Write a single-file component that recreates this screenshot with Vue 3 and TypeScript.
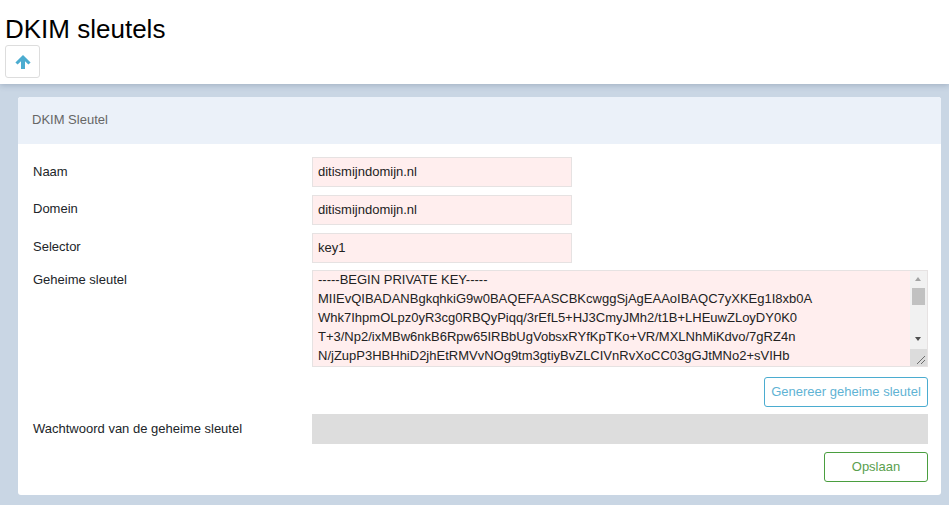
<script setup lang="ts">
const keyText = [
  '-----BEGIN PRIVATE KEY-----',
  'MIIEvQIBADANBgkqhkiG9w0BAQEFAASCBKcwggSjAgEAAoIBAQC7yXKEg1I8xb0A',
  'Whk7IhpmOLpz0yR3cg0RBQyPiqq/3rEfL5+HJ3CmyJMh2/t1B+LHEuwZLoyDY0K0',
  'T+3/Np2/ixMBw6nkB6Rpw65IRBbUgVobsxRYfKpTKo+VR/MXLNhMiKdvo/7gRZ4n',
  'N/jZupP3HBHhiD2jhEtRMVvNOg9tm3gtiyBvZLCIVnRvXoCC03gGJtMNo2+sVIHb',
].join('\n')
</script>

<template>
  <div class="page">
    <header class="top">
      <h1 class="title">DKIM sleutels</h1>
      <button class="up" type="button" aria-label="Omhoog">
        <svg width="16" height="14" viewBox="0 0 16 14">
          <path d="M8 0 L15.6 7.4 L13.4 9.4 L10 6.2 V14 H6 V6.2 L2.6 9.4 L0.4 7.4 Z" fill="#4bacd0" />
        </svg>
      </button>
    </header>
    <main class="main">
      <section class="card">
        <div class="card-head">DKIM Sleutel</div>
        <form class="card-body" @submit.prevent>
          <div class="row name-row">
            <label class="lbl">Naam</label>
            <input class="inp" value="ditismijndomijn.nl" />
          </div>
          <div class="row">
            <label class="lbl">Domein</label>
            <input class="inp" value="ditismijndomijn.nl" />
          </div>
          <div class="row">
            <label class="lbl">Selector</label>
            <input class="inp" value="key1" />
          </div>
          <div class="row key-row">
            <label class="lbl">Geheime sleutel</label>
            <div class="ta-wrap">
              <textarea class="ta" readonly :value="keyText"></textarea>
              <div class="sb">
                <span class="sb-arrow up-arrow"></span>
                <span class="sb-thumb"></span>
                <span class="sb-arrow down-arrow"></span>
                <span class="sb-corner">
                  <svg width="17" height="17" viewBox="0 0 17 17">
                    <path d="M7 15 L15 7 M11 15 L15 11" stroke="#6d6d6d" stroke-width="1" fill="none" />
                  </svg>
                </span>
              </div>
            </div>
          </div>
          <div class="actions first">
            <button class="btn info" type="button">Genereer geheime sleutel</button>
          </div>
          <div class="row pw">
            <label class="lbl">Wachtwoord van de geheime sleutel</label>
            <div class="disabled"></div>
          </div>
          <div class="actions">
            <button class="btn save" type="submit">Opslaan</button>
          </div>
        </form>
      </section>
    </main>
  </div>
</template>

<style>
html, body { margin: 0; background: #c9d6e4; }
</style>

<style scoped>
.page {
  height: 505px;
  overflow: hidden;
  background: #c9d6e4;
  font-family: "Liberation Sans", Arial, sans-serif;
  color: #212529;
}
.top {
  height: 84px;
  box-sizing: border-box;
  background: #fff;
  padding: 14px 5px 0;
  box-shadow: 0 1px 6px rgba(60, 80, 110, 0.3);
  position: relative;
}
.title {
  margin: 0 0 1px;
  font-size: 26px;
  line-height: 30px;
  font-weight: 400;
  color: #000;
}
.up {
  display: flex;
  align-items: center;
  justify-content: center;
  width: 35px;
  height: 33px;
  padding: 0;
  background: #fff;
  border: 1px solid #ddd;
  border-radius: 3px;
}
.main { padding: 13px 8px 0 18px; }
.card {
  height: 398px;
  background: #fff;
  border-radius: 3px;
  overflow: hidden;
}
.card-head {
  height: 47px;
  box-sizing: border-box;
  padding: 15px 14px 0;
  background: #ebf1f9;
  font-size: 13px;
  line-height: 15px;
  color: #666;
}
.card-body {
  padding: 13px 13px 0 15px;
  display: flex;
  flex-direction: column;
}
.row {
  display: flex;
  align-items: flex-start;
  margin-bottom: 8px;
}
.key-row { margin-top: -1px; }
.lbl {
  flex: 0 0 279px;
  font-size: 13px;
  line-height: 16px;
  padding-top: 6px;
  color: #212529;
}
.name-row .lbl, .pw .lbl { padding-top: 7px; }
.key-row .lbl { padding-top: 2px; }
.inp {
  width: 260px;
  height: 30px;
  box-sizing: border-box;
  padding: 0 5px 2px;
  background: #ffeeee;
  border: 1px solid #e6e2e2;
  font: 13px "Liberation Sans", Arial, sans-serif;
  color: #222;
  outline: none;
}
.ta-wrap {
  position: relative;
  flex: 1;
  height: 97px;
  box-sizing: border-box;
  background: #ffeeee;
  border: 1px solid #e6e2e2;
  overflow: hidden;
}
.ta {
  display: block;
  width: 100%;
  height: 96px;
  margin-top: -1px;
  box-sizing: border-box;
  padding: 0 22px 0 5px;
  background: transparent;
  border: 0;
  font: 13px/19px "Liberation Sans", Arial, sans-serif;
  color: #222;
  white-space: pre;
  overflow: hidden;
  resize: none;
  outline: none;
}
.sb {
  position: absolute;
  top: 0;
  right: 0;
  bottom: 0;
  width: 17px;
  background: #f1f1f1;
}
.sb-thumb {
  position: absolute;
  top: 17px;
  left: 2px;
  width: 13px;
  height: 17px;
  background: #c1c1c1;
}
.sb-arrow {
  position: absolute;
  left: 5px;
  width: 0;
  height: 0;
  border-left: 3.5px solid transparent;
  border-right: 3.5px solid transparent;
}
.up-arrow { top: 6px; border-bottom: 4px solid #a3a3a3; }
.down-arrow { top: 66px; border-top: 4px solid #505050; }
.sb-corner {
  position: absolute;
  right: 0;
  bottom: 0;
  width: 17px;
  height: 17px;
  background: #dcdcdc;
  display: block;
}
.sb-corner svg { display: block; }
.actions {
  display: flex;
  justify-content: flex-end;
}
.actions.first { margin: 2px 0 7px; }
.btn {
  height: 30px;
  box-sizing: border-box;
  background: #fff;
  border-radius: 3px;
  font: 13px "Liberation Sans", Arial, sans-serif;
  padding: 0 0 2px;
}
.info {
  width: 164px;
  border: 1px solid #4bacd0;
  color: #5fb3d4;
}
.save {
  width: 104px;
  border: 1px solid #4a9e3f;
  color: #5aa04e;
}
.pw .disabled {
  flex: 1;
  height: 30px;
  background: #dddddd;
}
</style>
